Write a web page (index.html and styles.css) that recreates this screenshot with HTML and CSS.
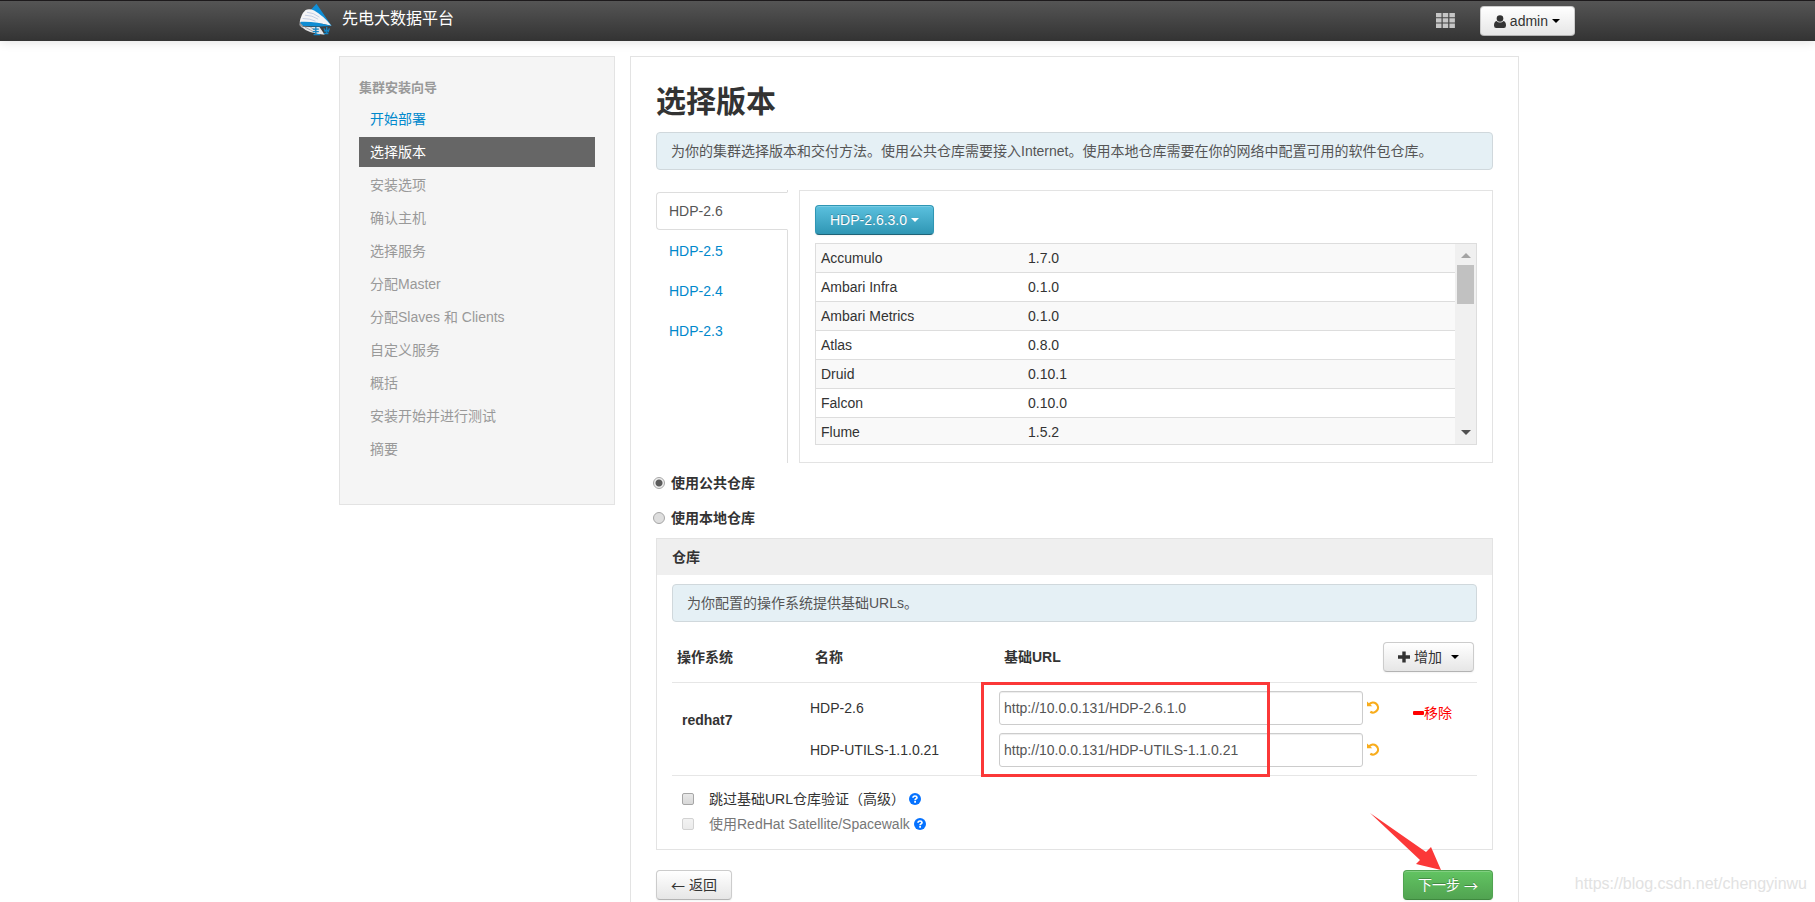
FILE: index.html
```html
<!DOCTYPE html>
<html lang="zh-CN">
<head>
<meta charset="utf-8">
<title>先电大数据平台</title>
<link rel="stylesheet" href="styles.css">
</head>
<body>
<header class="navbar">
  <div class="navbar-inner">
    <a class="brand" href="#">
      <svg class="logo" viewBox="0 0 100 98" aria-hidden="true">
        <path d="M53 1 99 69 80 60 34 22Z" fill="#0f8fd8"/>
        <path d="M20 20Q32 15 46 22 74 38 98 68L70 62 2 58Q5 34 20 20Z" fill="#f4f4f6"/>
        <path d="M24 27Q44 28 62 42M18 36Q40 36 58 48M11 46Q34 46 50 54" fill="none" stroke="#a9badb" stroke-width="2"/>
        <path d="M5 56Q50 54 99 69 50 72 4 68Z" fill="#108dd3"/>
        <path d="M2 58 1 66 8 74 12 67Z" fill="#9a9a9c"/>
        <path d="M6 70Q30 72 62 72L78 95Q28 92 6 70Z" fill="#e4e4e6"/>
        <path d="M18 72 44 86M34 72 50 82" stroke="#888" stroke-width="2"/>
        <path d="M42 78h18M51 72v22M42 86h18M44 95h20M76 82h16M84 72v18M76 76l4 12M92 76l-4 12M75 92h14" stroke="#1384c4" stroke-width="4"/>
      </svg>
      <span>先电大数据平台</span>
    </a>
    <div class="nav-right">
      <button class="grid-btn" type="button" aria-label="视图">
        <svg width="19" height="15" viewBox="0 0 19 15" fill="#c6c6c6" aria-hidden="true">
          <path d="M0 0h5.500v4.300H0zM6.700 0h5.500v4.300H6.700zM13.400 0h5.500v4.300h-5.500zM0 5.300h5.500v4.300H0zM6.700 5.300h5.500v4.300H6.700zM13.400 5.300h5.500v4.300h-5.500zM0 10.600h5.500v4.300H0zM6.700 10.600h5.500v4.300H6.700zM13.400 10.600h5.500v4.300h-5.500z"/>
        </svg>
      </button>
      <button class="btn btn-user" type="button">
        <svg width="12" height="13" viewBox="0 0 12 13" fill="#333" aria-hidden="true"><circle cx="6" cy="3.500" r="3.300"/><path d="M2.500 6Q4 7.600 6 7.600T9.500 6Q12 6.500 12 10.500 12 13 9.800 13H2.200Q0 13 0 10.500 0 6.500 2.500 6Z"/></svg>
        <span>admin</span><i class="caret"></i>
      </button>
    </div>
  </div>
</header>

<div class="page">
  <nav class="sidebar">
    <h5 class="sidebar-title">集群安装向导</h5>
    <ul class="steps">
      <li><a class="step step-done" href="#">开始部署</a></li>
      <li><a class="step step-active" href="#">选择版本</a></li>
      <li><a class="step">安装选项</a></li>
      <li><a class="step">确认主机</a></li>
      <li><a class="step">选择服务</a></li>
      <li><a class="step">分配Master</a></li>
      <li><a class="step">分配Slaves 和 Clients</a></li>
      <li><a class="step">自定义服务</a></li>
      <li><a class="step">概括</a></li>
      <li><a class="step">安装开始并进行测试</a></li>
      <li><a class="step">摘要</a></li>
    </ul>
  </nav>

  <main class="content">
    <h2 class="title">选择版本</h2>
    <div class="alert">为你的集群选择版本和交付方法。使用公共仓库需要接入Internet。使用本地仓库需要在你的网络中配置可用的软件包仓库。</div>

    <section class="versions">
      <ul class="tabs">
        <li><a class="tab tab-active" href="#">HDP-2.6</a></li>
        <li><a class="tab" href="#">HDP-2.5</a></li>
        <li><a class="tab" href="#">HDP-2.4</a></li>
        <li><a class="tab" href="#">HDP-2.3</a></li>
      </ul>
      <div class="version-panel">
        <button class="btn btn-info" type="button"><span>HDP-2.6.3.0</span><i class="caret"></i></button>
        <div class="services">
          <div class="services-view">
            <table class="services-table">
              <tbody>
                <tr><td class="service-name">Accumulo</td><td>1.7.0</td></tr>
                <tr><td>Ambari Infra</td><td>0.1.0</td></tr>
                <tr><td>Ambari Metrics</td><td>0.1.0</td></tr>
                <tr><td>Atlas</td><td>0.8.0</td></tr>
                <tr><td>Druid</td><td>0.10.1</td></tr>
                <tr><td>Falcon</td><td>0.10.0</td></tr>
                <tr><td>Flume</td><td>1.5.2</td></tr>
              </tbody>
            </table>
          </div>
          <div class="scrollbar" aria-hidden="true">
            <i class="arrow-up"></i>
            <i class="thumb"></i>
            <i class="arrow-down"></i>
          </div>
        </div>
      </div>
    </section>

    <div class="sources">
      <label class="source"><input class="radio" type="radio" name="source" checked><span>使用公共仓库</span></label>
      <label class="source"><input class="radio" type="radio" name="source"><span>使用本地仓库</span></label>
    </div>

    <section class="repo">
      <h3 class="repo-head">仓库</h3>
      <div class="repo-body">
        <div class="alert">为你配置的操作系统提供基础URLs。</div>
        <div class="repo-list">
          <table class="repo-table">
            <colgroup><col class="col-os"><col class="col-name"><col><col class="col-action"></colgroup>
            <thead>
              <tr>
                <th class="th-os">操作系统</th>
                <th>名称</th>
                <th>基础URL</th>
                <th class="th-action">
                  <button class="btn btn-add" type="button"><svg width="12" height="12" viewBox="0 0 12 12" fill="#333" aria-hidden="true"><path d="M4.300 0.500h3.400v3.800H12v3.400H7.700v3.800H4.300V7.700H0V4.300h4.300z"/></svg><span>增加</span><i class="caret"></i></button>
                </th>
              </tr>
            </thead>
            <tbody>
              <tr class="row-first">
                <td class="os" rowspan="2">redhat7</td>
                <td><label for="url-hdp">HDP-2.6</label></td>
                <td><div class="url"><input class="url-input" id="url-hdp" type="text" value="http://10.0.0.131/HDP-2.6.1.0"><button class="undo" type="button" aria-label="撤销"><svg width="13" height="13" viewBox="0 0 13 13" aria-hidden="true"><path d="M2.200 3.300A5 5 0 1 1 3.300 10.800" fill="none" stroke="#f8ac1b" stroke-width="2.200"/><path d="M0 0.500 5.300 5.300H0z" fill="#f8ac1b"/></svg></button></div></td>
                <td class="remove-cell" rowspan="2"><a class="remove" href="#"><svg width="11" height="4" viewBox="0 0 11 4" aria-hidden="true"><rect width="11" height="4" rx="1" fill="#f00"/></svg><span>移除</span></a></td>
              </tr>
              <tr class="row-last">
                <td><label for="url-utils">HDP-UTILS-1.1.0.21</label></td>
                <td><div class="url"><input class="url-input" id="url-utils" type="text" value="http://10.0.0.131/HDP-UTILS-1.1.0.21"><button class="undo" type="button" aria-label="撤销"><svg width="13" height="13" viewBox="0 0 13 13" aria-hidden="true"><path d="M2.200 3.300A5 5 0 1 1 3.300 10.800" fill="none" stroke="#f8ac1b" stroke-width="2.200"/><path d="M0 0.500 5.300 5.300H0z" fill="#f8ac1b"/></svg></button></div></td>
              </tr>
            </tbody>
          </table>
          <div class="mark-box"></div>
        </div>
        <div class="options">
          <div class="option">
            <label class="option-label"><input class="check" type="checkbox"><span>跳过基础URL仓库验证（高级）</span></label>
            <svg class="help" viewBox="0 0 12 12" aria-hidden="true"><circle cx="6" cy="6" r="6" fill="#0572ff"/><path d="M4 4.700Q4.100 3 6 3T8 4.600Q8 5.500 6.900 6 6.100 6.400 6.100 7.200" fill="none" stroke="#fff" stroke-width="1.700"/><path d="M5.200 8h1.800v1.700H5.200z" fill="#fff"/></svg>
          </div>
          <div class="option option-off">
            <label class="option-label"><input class="check" type="checkbox" disabled><span>使用RedHat Satellite/Spacewalk</span></label>
            <svg class="help" viewBox="0 0 12 12" aria-hidden="true"><circle cx="6" cy="6" r="6" fill="#0572ff"/><path d="M4 4.700Q4.100 3 6 3T8 4.600Q8 5.500 6.900 6 6.100 6.400 6.100 7.200" fill="none" stroke="#fff" stroke-width="1.700"/><path d="M5.200 8h1.800v1.700H5.200z" fill="#fff"/></svg>
          </div>
        </div>
      </div>
    </section>

    <div class="actions">
      <button class="btn btn-step" type="button"><span class="glyph">←</span><span>返回</span></button>
      <div class="next">
        <button class="btn btn-step btn-success" type="button"><span>下一步</span><span class="glyph">→</span></button>
        <svg class="mark-arrow" width="72" height="58" viewBox="0 0 72 58" aria-hidden="true"><path d="M0 0 56 39 61 34 71 57 46 51 50 47Z" fill="#fb3838"/></svg>
      </div>
    </div>
  </main>
</div>
<div class="watermark">https://blog.csdn.net/chengyinwu</div>
</body>
</html>
```
FILE: styles.css
```css
* { box-sizing: border-box; }

body {
  position: relative;
  margin: 0;
  background: #fff;
  color: #333;
  font: 14px/20px "Liberation Sans", "Noto Sans CJK SC", sans-serif;
}

a { color: #08c; text-decoration: none; }
ul { margin: 0; padding: 0; list-style: none; }
svg { flex: none; }
button, input { font: inherit; }

/* top bar */
.navbar {
  height: 41px;
  border-top: 1px solid #1d1a1c;
  background: linear-gradient(#555, #333);
  box-shadow: 0 1px 10px rgba(0, 0, 0, 0.12);
}
.navbar-inner, .page {
  max-width: 1335px;
  margin: 0 auto;
  padding-left: 59px;
}
.navbar-inner {
  display: flex;
  align-items: center;
  justify-content: space-between;
  height: 40px;
}
.brand {
  display: flex;
  align-items: center;
  gap: 10px;
  padding-bottom: 4px;
  color: #fff;
  font-size: 16px;
}
.logo { width: 33px; height: 33px; }
.nav-right { display: flex; align-items: center; gap: 25px; }
.grid-btn { display: flex; padding: 0 0 1px; border: 0; background: none; }

/* buttons */
.btn {
  display: inline-flex;
  align-items: center;
  justify-content: center;
  height: 30px;
  padding: 0 14px;
  border: 1px solid #ccc;
  border-bottom-color: #b3b3b3;
  border-radius: 4px;
  background: linear-gradient(#fff, #e6e6e6);
  box-shadow: inset 0 1px 0 rgba(255, 255, 255, 0.2), 0 1px 2px rgba(0, 0, 0, 0.05);
  color: #333;
  white-space: nowrap;
}
.caret {
  width: 0;
  height: 0;
  border: 4px solid transparent;
  border-top-color: currentColor;
  border-bottom: 0;
}
.btn-user { gap: 4px; padding: 0 14px 0 13px; }
.btn-user .caret, .btn-add .caret { border-top-color: #000; }
.btn-info {
  gap: 4px;
  border-color: #2f96b4 #2f96b4 #1f6377;
  background: linear-gradient(#5bc0de, #2f96b4);
  color: #fff;
  text-shadow: 0 -1px 0 rgba(0, 0, 0, 0.25);
}
.btn-success {
  border-color: #51a351 #51a351 #3f8a3f;
  background: linear-gradient(#62c462, #51a351);
  color: #fff;
  text-shadow: 0 -1px 0 rgba(0, 0, 0, 0.25);
}
.btn-add { gap: 4px; font-weight: normal; }
.btn-add .caret { margin-left: 5px; }
.btn-step { gap: 4px; }
.glyph { font-family: "Noto Sans CJK SC", sans-serif; }

/* page columns */
.page {
  display: flex;
  align-items: flex-start;
  gap: 15px;
  margin-top: 15px;
  padding-right: 56px;
  padding-left: 99px;
}
.sidebar {
  flex: 0 0 276px;
  padding: 19px 19px 40px;
  border: 1px solid #e3e3e3;
  background: #f5f5f5;
}
.sidebar-title {
  margin: 0 0 4px;
  color: #999;
  font-size: 13px;
  line-height: 24px;
}
.steps { display: grid; gap: 3px; }
.step { display: block; padding: 5px 11px; color: #999; }
.step-done { color: #08c; }
.step-active { background: #666; color: #fff; }

.content {
  flex: 1;
  min-width: 0;
  padding: 25px 25px 2px;
  border: 1px solid #e3e3e3;
  border-bottom: 0;
}
.title { margin: 0 0 10px; font-size: 30px; line-height: 40px; }
.alert {
  padding: 8px 14px;
  border: 1px solid #d0d8dc;
  border-radius: 4px;
  background: #e5f0f5;
  color: #555;
}

/* versions */
.versions { display: flex; gap: 11px; margin-top: 20px; }
.tabs {
  display: flex;
  flex: 0 0 132px;
  flex-direction: column;
  gap: 2px;
  padding-top: 2px;
  border-right: 1px solid #ddd;
}
.tab {
  display: block;
  padding: 8px 12px;
  border: 1px solid transparent;
  border-radius: 4px 0 0 4px;
}
.tab-active {
  margin-right: -1px;
  border-color: #ddd #fff #ddd #ddd;
  background: #fff;
  color: #555;
}
.version-panel {
  flex: 1;
  min-width: 0;
  padding: 14px 15px 17px;
  border: 1px solid #e3e3e3;
}
.services {
  display: flex;
  height: 202px;
  margin-top: 8px;
  border: 1px solid #ddd;
}
.services-view { flex: 1; overflow: hidden; }
.services-table { width: 100%; border-spacing: 0; }
.services-table td {
  height: 29px;
  padding: 4px 5px;
  border-bottom: 1px solid #ddd;
}
.services-table tr:nth-child(odd) { background: #f9f9f9; }
.service-name { width: 207px; }
.scrollbar {
  display: flex;
  flex: 0 0 21px;
  flex-direction: column;
  align-items: center;
  padding: 9px 0;
  background: #f0f0f0;
}
.arrow-up, .arrow-down { border: 5px solid transparent; }
.arrow-up { border-top: 0; border-bottom-color: #a3a3a3; }
.arrow-down { margin-top: auto; border-bottom: 0; border-top-color: #505050; }
.thumb { width: 17px; height: 39px; margin-top: 7px; background: #c1c1c1; }

/* repository source */
.sources {
  display: grid;
  gap: 15px;
  margin: 10px 0 10px -3px;
}
.source { display: flex; align-items: center; gap: 6px; font-weight: bold; }
.radio, .check {
  flex: none;
  width: 12px;
  height: 12px;
  margin: 0;
  appearance: none;
  border: 1px solid #a6a6a6;
  background: #dedede;
}
.radio { border-radius: 50%; }
.radio:checked { background: radial-gradient(circle, #5c5c5c 3px, #eee 4px); }
.check { border-radius: 2px; background: linear-gradient(#e8e8e8, #d8d8d8); }

/* repositories */
.repo { border: 1px solid #e3e3e3; }
.repo-head {
  margin: 0;
  padding: 8px 15px;
  background: #efefef;
  font-size: 14px;
  line-height: 20px;
}
.repo-body { padding: 9px 15px 15px; }
.repo-list { position: relative; margin-top: 5px; }
.repo-table {
  width: 100%;
  border-spacing: 0;
  table-layout: fixed;
}
.col-os { width: 133px; }
.col-name { width: 189px; }
.col-action { width: 94px; }
.repo-table th {
  height: 56px;
  padding: 4px 0 0 10px;
  border-bottom: 1px solid #e6e6e6;
  text-align: left;
}
.repo-table .th-os { padding-left: 5px; }
.repo-table .th-action { padding: 4px 5px 0 0; text-align: right; }
.repo-table td { padding: 0 0 0 5px; }
.repo-table .row-first td { padding-top: 8px; padding-bottom: 4px; }
.repo-table .row-last td { padding-top: 4px; padding-bottom: 8px; }
.repo-table .row-first .os { padding: 0 0 18px 10px; font-weight: bold; }
.repo-table .row-first .remove-cell { padding: 20px 0 0 30px; vertical-align: top; }
.url { display: flex; align-items: center; gap: 4px; padding-right: 3px; }
.url-input {
  flex: 1;
  min-width: 0;
  height: 34px;
  padding: 0 4px;
  border: 1px solid #ccc;
  border-radius: 3px;
  box-shadow: inset 0 1px 1px rgba(0, 0, 0, 0.075);
  color: #555;
}
.undo { display: flex; padding: 0 0 2px; border: 0; background: none; }
.remove { display: flex; align-items: center; color: #f00; }

.mark-box {
  position: absolute;
  top: 55px;
  left: 309px;
  width: 289px;
  height: 95px;
  border: 3px solid #fb3838;
  pointer-events: none;
}

.options {
  display: grid;
  gap: 5px;
  padding: 13px 0 0 10px;
  border-top: 1px solid #e6e6e6;
}
.option { display: flex; align-items: center; gap: 4px; }
.option-label { display: flex; align-items: center; gap: 15px; }
.option-off { color: #777; }
.option-off .check { opacity: 0.5; }
.help { width: 12px; height: 12px; }

.actions {
  display: flex;
  justify-content: space-between;
  margin-top: 20px;
}
.next { position: relative; display: flex; }
.mark-arrow {
  position: absolute;
  right: 51px;
  bottom: 29px;
  pointer-events: none;
}
.watermark {
  position: absolute;
  right: 8px;
  bottom: 8px;
  color: #e2e2e2;
  font-size: 16px;
}
```
